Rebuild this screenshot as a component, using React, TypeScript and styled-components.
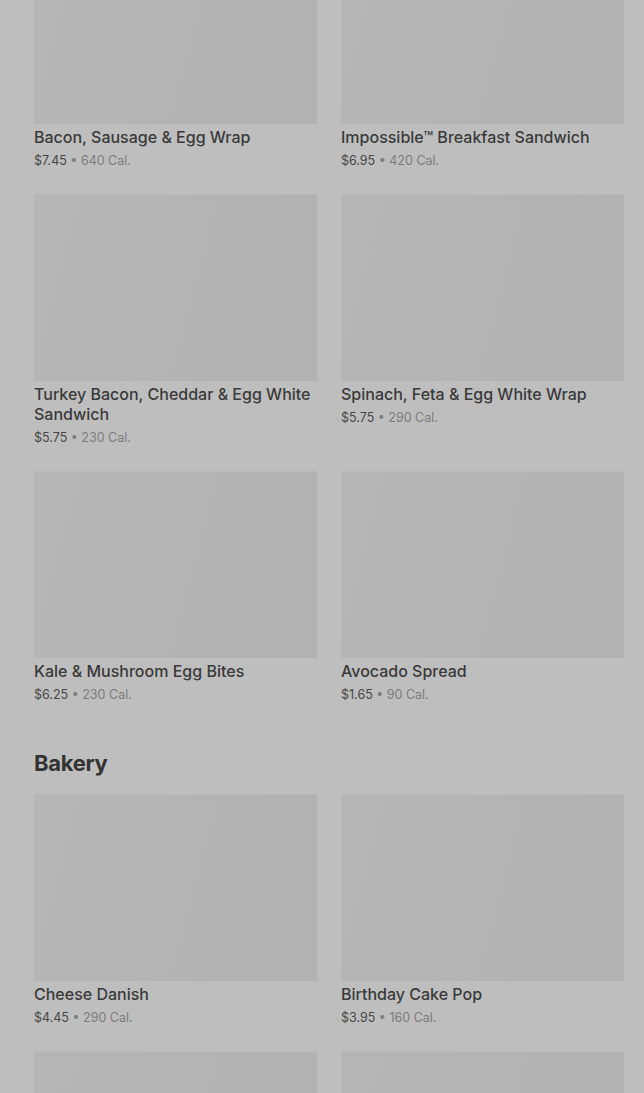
import React from "react";
import styled, { createGlobalStyle } from "styled-components";

const Global = createGlobalStyle`
  html, body {
    margin: 0;
    padding: 0;
    background: #bebebe;
    overflow: hidden;
  }
  body {
    font-family: Inter, "Noto Sans", "Liberation Sans", sans-serif;
    -webkit-font-smoothing: antialiased;
  }
`;

const Page = styled.main`
  margin-top: -63px;
  padding: 0 20px 0 34px;
  display: flex;
  flex-direction: column;
`;

const Section = styled.section`
  display: flex;
  flex-direction: column;
`;

const SectionTitle = styled.h2`
  margin: 42px 0 15px;
  font-size: 22px;
  line-height: 32px;
  font-weight: 700;
  letter-spacing: -0.3px;
  color: #333333;
`;

const Grid = styled.div`
  display: grid;
  grid-template-columns: 283px 283px;
  column-gap: 24px;
  row-gap: 23px;
`;

const Card = styled.article`
  display: flex;
  flex-direction: column;
`;

const Thumb = styled.div`
  height: 187px;
  background: linear-gradient(105deg, #b6b6b6 0%, #b5b5b5 35%, #b3b3b3 60%, #b2b2b2 100%);
  box-shadow: inset 0 1px 0 #b9b9b9;
`;

const Name = styled.h3`
  margin: 3px 0 0;
  font-size: 16px;
  line-height: 20px;
  font-weight: 500;
  color: #3a3a3a;
`;

const Meta = styled.p`
  margin: 4px 0 0;
  font-size: 12.5px;
  line-height: 20px;
  color: #7c7c7c;
`;

const Price = styled.span`
  color: #474747;
`;

type Item = { name: string; price: string; cal: number };

const breakfast: Item[] = [
  { name: "Bacon, Sausage & Egg Wrap", price: "$7.45", cal: 640 },
  { name: "Impossible™ Breakfast Sandwich", price: "$6.95", cal: 420 },
  { name: "Turkey Bacon, Cheddar & Egg White Sandwich", price: "$5.75", cal: 230 },
  { name: "Spinach, Feta & Egg White Wrap", price: "$5.75", cal: 290 },
  { name: "Kale & Mushroom Egg Bites", price: "$6.25", cal: 230 },
  { name: "Avocado Spread", price: "$1.65", cal: 90 },
];

const bakery: Item[] = [
  { name: "Cheese Danish", price: "$4.45", cal: 290 },
  { name: "Birthday Cake Pop", price: "$3.95", cal: 160 },
  { name: "Butter Croissant", price: "$3.75", cal: 260 },
  { name: "Blueberry Muffin", price: "$3.45", cal: 360 },
];

function ItemCard({ item }: { item: Item }) {
  return (
    <Card>
      <Thumb />
      <Name>{item.name}</Name>
      <Meta>
        <Price>{item.price}</Price> • {item.cal} Cal.
      </Meta>
    </Card>
  );
}

export default function App() {
  return (
    <>
      <Global />
      <Page>
        <Section>
          <Grid>
            {breakfast.map((it) => (
              <ItemCard key={it.name} item={it} />
            ))}
          </Grid>
        </Section>
        <Section>
          <SectionTitle>Bakery</SectionTitle>
          <Grid>
            {bakery.map((it) => (
              <ItemCard key={it.name} item={it} />
            ))}
          </Grid>
        </Section>
      </Page>
    </>
  );
}
